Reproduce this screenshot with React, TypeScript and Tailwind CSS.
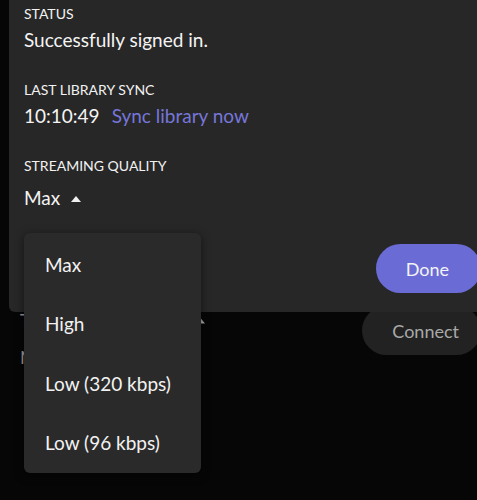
import React from "react";

const font = { fontFamily: "Lato, 'Noto Sans', sans-serif" };

function Caret({ className }: { className?: string }) {
  return (
    <svg viewBox="0 0 10 6" className={className} fill="currentColor">
      <path d="M0 6 L5 0 L10 6 Z" />
    </svg>
  );
}

export default function App() {
  const items = ["Max", "High", "Low (320 kbps)", "Low (96 kbps)"];
  return (
    <div
      className="relative w-[477px] h-[500px] overflow-hidden bg-[#060606] text-white"
      style={font}
    >
      {/* page behind the modal */}
      <div className="flex flex-col pt-[306px] pl-[20px]">
        <div className="flex items-start justify-between">
          <div className="flex items-center gap-[2px] pt-[2px] text-[18px] leading-[24px] text-[#9a9a9a]">
            <span className="w-[173px]">Tidal</span>
            <Caret className="w-[10px] h-[7px] text-[#a8a8a8]" />
          </div>
          <button className="h-[49px] rounded-full bg-[#222222] pl-[30px] pr-[22px] mr-[-4px] text-[18px] leading-[24px] text-[#a9a9a9]">
            Connect
          </button>
        </div>
        <div className="mt-[-10px] text-[18px] leading-[24px] text-[#9a9a9a]">
          Now playing
        </div>
      </div>

      {/* settings panel */}
      <div className="absolute left-[9px] top-0 right-0 h-[312px] rounded-bl-[6px] bg-[#272727] pl-[15px] pt-[4px]">
        <div className="text-[14px] leading-[20px] text-[#f2f2f2]">STATUS</div>
        <div className="mt-[4px] text-[19px] leading-[24px] text-[#f4f4f4]">
          Successfully signed in.
        </div>
        <div className="mt-[28px] text-[14px] leading-[20px] text-[#f2f2f2]">
          LAST LIBRARY SYNC
        </div>
        <div className="mt-[4px] flex gap-[12px] text-[19px] leading-[24px]">
          <span className="text-[#f4f4f4]">10:10:49</span>
          <span className="text-[#7676d9]">Sync library now</span>
        </div>
        <div className="mt-[28px] text-[14px] leading-[20px] text-[#f2f2f2]">
          STREAMING QUALITY
        </div>
        <div className="mt-[10px] flex items-center gap-[11px] text-[19px] leading-[24px] text-[#f4f4f4]">
          <span>Max</span>
          <Caret className="w-[10px] h-[6px] mt-[2px] text-[#f0f0f0]" />
        </div>
        <div className="flex justify-end mt-[34px]">
          <button className="h-[49px] rounded-full bg-[#6b6bd6] pl-[30px] pr-[32px] mr-[-4px] text-[18px] leading-[24px] text-[#f4f4f4]">
            Done
          </button>
        </div>
      </div>

      {/* dropdown menu */}
      <div className="absolute left-[24px] top-[233px] w-[177px] rounded-[6px] bg-[#2a2a2a] pt-[2px] pb-[0px] shadow-[0_2px_10px_rgba(0,0,0,0.5)]">
        {items.map((it) => (
          <div
            key={it}
            className="flex h-[59.5px] items-center pl-[21px] text-[19px] leading-[24px] text-[#f2f2f2]"
          >
            {it}
          </div>
        ))}
      </div>
    </div>
  );
}
